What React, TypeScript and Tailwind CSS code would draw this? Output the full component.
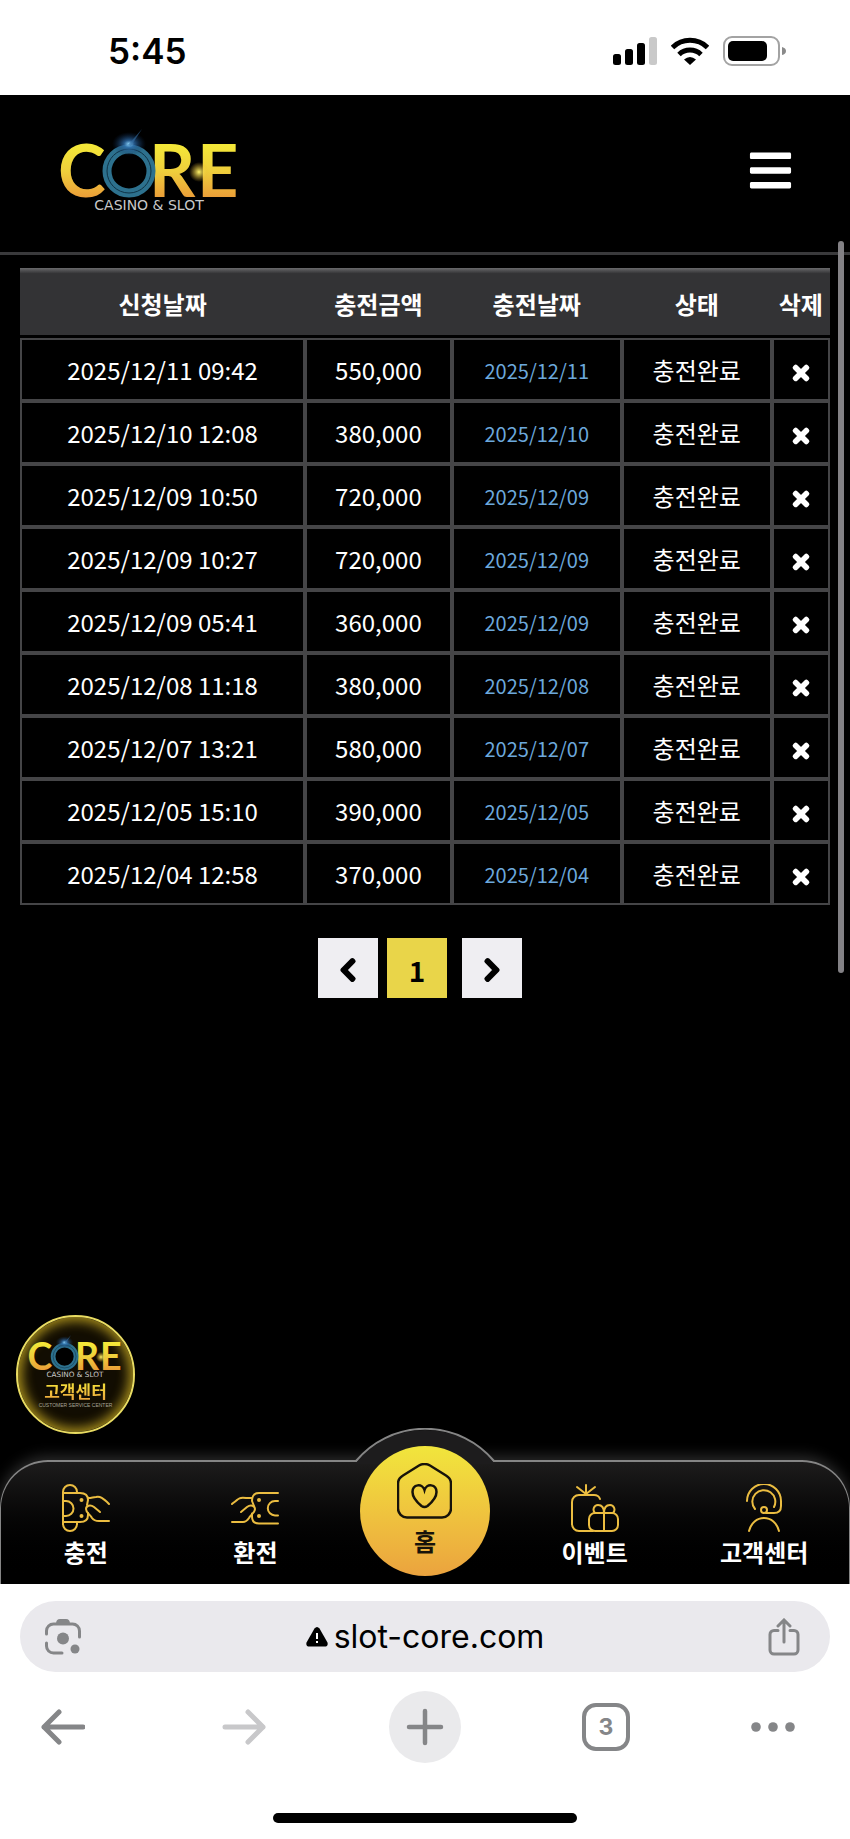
import { FaBars, FaChevronLeft, FaChevronRight, FaTimes } from "react-icons/fa"

const deposits = [
	{ requested: "2025/12/11 09:42", amount: "550,000", date: "2025/12/11" },
	{ requested: "2025/12/10 12:08", amount: "380,000", date: "2025/12/10" },
	{ requested: "2025/12/09 10:50", amount: "720,000", date: "2025/12/09" },
	{ requested: "2025/12/09 10:27", amount: "720,000", date: "2025/12/09" },
	{ requested: "2025/12/09 05:41", amount: "360,000", date: "2025/12/09" },
	{ requested: "2025/12/08 11:18", amount: "380,000", date: "2025/12/08" },
	{ requested: "2025/12/07 13:21", amount: "580,000", date: "2025/12/07" },
	{ requested: "2025/12/05 15:10", amount: "390,000", date: "2025/12/05" },
	{ requested: "2025/12/04 12:58", amount: "370,000", date: "2025/12/04" },
]

const line = {
	width: 48,
	height: 48,
	viewBox: "0 0 48 48",
	fill: "none",
	stroke: "#ebbd41",
	strokeWidth: 2,
	strokeLinecap: "round" as const,
	strokeLinejoin: "round" as const,
}

const icons = {
	Deposit: () => (
		<svg {...line}>
			<path d="M1 8v32a7 7 0 0 0 14 0v-2M1 8a7 7 0 0 1 14 0v1" />
			<path d="M1 9h17c5 0 8 2 8 7l-1 5M1 38h17c5 0 8-2 8-7v-2" />
			<path d="M1 17h3a7.500 7.500 0 0 1 0 15H1" />
			<circle cx="19.500" cy="16" r="1" fill="#ebbd41" />
			<circle cx="19.500" cy="32" r="1" fill="#ebbd41" />
			<path d="M26 14c4 0 5-1 8-1 4-1 7 1 13 7" />
			<path d="M38 28l-6-5c-4-3-8-1-8 2 0 4 4 5 6 9 2 3 4 3 7 3h10" />
		</svg>
	),
	Withdraw: () => (
		<svg {...line}>
			<path d="M47 9H28c-5 0-7 3-7 8l2 5M47 39.500H28c-5 0-7-3-7-7v-3" />
			<path d="M47 17h-3a7.200 7.200 0 0 0 0 14.400h3" />
			<circle cx="28" cy="16" r="1" fill="#ebbd41" />
			<circle cx="28" cy="32" r="1" fill="#ebbd41" />
			<path d="M21 14h-6c-6-1-7 0-14 6" />
			<path d="M10 28l6-5c4-3 8-1 8 2 0 4-4 5-6 9-2 3-3 4-6 4H1" />
		</svg>
	),
	Event: () => (
		<svg {...line}>
			<path d="M15 10V1M15 10L6 3M15 10l9-7" />
			<path d="M29 15c-1-3-3-4-6-4H8a7 7 0 0 0-7 7v22a7 7 0 0 0 7 7h14" />
			<rect x="18" y="29" width="29" height="18" rx="6" />
			<path d="M33 29v18M33 29c0-5-2-8-6-8s-6 5-3 8M33 29c0-5 2-8 6-8s6 5 3 8" />
		</svg>
	),
	Support: () => (
		<svg {...line}>
			<path d="M7 17a17 17 0 0 1 34 0v5c0 5-3 7-7 7h-8" />
			<path d="M15 25a11.500 11.500 0 1 1 19-2" />
			<circle cx="24" cy="26" r="3" />
			<path d="M9 47c2-8 8-13 15-13s13 5 15 13" />
		</svg>
	),
	House: () => (
		<svg width="55" height="56" viewBox="0 0 55 56" fill="none" stroke="#17130a" strokeWidth="2.500">
			<path d="M22 2.500q5.500-3 11 0l16 10q5 3 5 8v25a9 9 0 0 1-9 9H10a9 9 0 0 1-9-9v-25q0-5 5-8z" />
			<path d="M27.500 27c-2-7-12-6-12 2 0 5 3 9 9 14q3 2 6 0c6-5 9-9 9-14 0-8-10-9-12-2z" />
		</svg>
	),
}

function Logo({ className }: { className: string }) {
	return (
		<svg viewBox="0 -6 190 96" className={className} role="img" aria-label="CORE CASINO & SLOT">
			<defs>
				<linearGradient id="gold" gradientUnits="userSpaceOnUse" x1="0" y1="17" x2="0" y2="69">
					<stop offset="0" stopColor="#f4e838" />
					<stop offset=".5" stopColor="#efcf3c" />
					<stop offset="1" stopColor="#eb9f38" />
				</linearGradient>
				<radialGradient id="flare">
					<stop offset="0" stopColor="#8fd8ff" />
					<stop offset=".3" stopColor="#2f6fae" stopOpacity=".8" />
					<stop offset="1" stopColor="#0d2b55" stopOpacity="0" />
				</radialGradient>
				<radialGradient id="spark">
					<stop offset="0" stopColor="#fff56a" />
					<stop offset="1" stopColor="#e8b52b" stopOpacity="0" />
				</radialGradient>
			</defs>
			<g fill="url(#gold)" fontFamily="Lato, sans-serif" fontWeight="700" fontSize="72">
				<text x="3" y="69">C</text>
				<text x="94" y="69">R</text>
				<text x="142" y="69">E</text>
			</g>
			<circle cx="74" cy="43" r="22" fill="#000" stroke="#2d718e" strokeWidth="9" />
			<circle cx="74" cy="43" r="22" fill="none" stroke="#0f3346" strokeWidth="1" />
			<ellipse cx="74" cy="16" rx="17" ry="12" fill="url(#flare)" />
			<path d="M73 17L87 1L76 18z" fill="#356fa5" opacity=".6" />
			<circle cx="144" cy="44" r="10" fill="url(#spark)" />
			<text x="94" y="82" textAnchor="middle" fill="#c9c9c9" fontFamily="DejaVu Sans, sans-serif" fontSize="14">
				CASINO &amp; SLOT
			</text>
		</svg>
	)
}

function StatusBar() {
	return (
		<div className="flex h-[95px] items-center justify-between bg-white pt-1.5 pr-16 pl-[108px]">
			<p className="font-['Inter',sans-serif] text-[35px] leading-10 font-semibold">5:45</p>
			<div className="flex items-center gap-[14px]">
				<svg width="44" height="28" viewBox="0 0 44 28">
					<rect x="0" y="17" width="8" height="11" rx="2.500" />
					<rect x="12" y="12" width="8" height="16" rx="2.500" />
					<rect x="24" y="6" width="8" height="22" rx="2.500" />
					<rect x="36" y="0" width="8" height="28" rx="2.500" fill="#c9c9c9" />
				</svg>
				<svg width="38" height="28" viewBox="0 0 38 28" fill="none" stroke="#000" strokeWidth="5">
					<path d="M1.500 10.500a25 25 0 0 1 35 0" />
					<path d="M8 17.500a16 16 0 0 1 22 0" />
					<path d="M13 22.500q6-5 12 0L19 28z" fill="#000" stroke="none" />
				</svg>
				<svg width="63" height="30" viewBox="0 0 63 30">
					<rect x="1" y="1" width="55" height="28" rx="8" fill="none" stroke="#a3a3a3" strokeWidth="2" />
					<rect x="5" y="5" width="39" height="20" rx="5" />
					<path d="M59 11q4 1 4 4t-4 4z" fill="#8a8a8a" />
				</svg>
			</div>
		</div>
	)
}

function DepositTable() {
	return (
		<table className="w-full table-fixed border-separate border-spacing-0 text-center text-[24px] leading-8">
			<colgroup>
				<col className="w-[35.2%]" />
				<col className="w-[18.1%]" />
				<col className="w-[21%]" />
				<col className="w-[18.5%]" />
				<col className="w-[7.2%]" />
			</colgroup>
			<thead>
				<tr className="h-[70px] bg-linear-to-b from-[#6a6a6c] to-[#333335] to-8%">
					{["신청날짜", "충전금액", "충전날짜", "상태", "삭제"].map((name) => (
						<th key={name} scope="col" className="border-b-3 border-black pt-1 font-bold whitespace-nowrap">
							{name}
						</th>
					))}
				</tr>
			</thead>
			<tbody>
				{deposits.map((row) => (
					<tr key={row.requested} className="h-[63px] *:border-2 *:border-[#454547]">
						<td>{row.requested}</td>
						<td>{row.amount}</td>
						<td>
							<span className="text-[20px] text-[#6ca8dc]">{row.date}</span>
						</td>
						<td>충전완료</td>
						<td>
							<button aria-label="삭제" className="align-middle">
								<FaTimes size={22} stroke="currentColor" strokeWidth={36} />
							</button>
						</td>
					</tr>
				))}
			</tbody>
		</table>
	)
}

function Pagination() {
	return (
		<div className="mt-[33px] flex justify-center pr-[10px] text-black *:flex *:size-[60px] *:items-center *:justify-center *:pt-1">
			<button aria-label="이전" className="bg-[#efeef2]">
				<FaChevronLeft size={26} stroke="currentColor" strokeWidth={36} />
			</button>
			<button className="mr-[15px] ml-[9px] bg-[#e9d549] text-[28px] leading-8 font-bold">1</button>
			<button aria-label="다음" className="bg-[#efeef2]">
				<FaChevronRight size={26} stroke="currentColor" strokeWidth={36} />
			</button>
		</div>
	)
}

function TabItem({ icon: Icon, label }: { icon: () => React.ReactNode; label: string }) {
	return (
		<a href="#" className="flex flex-col items-center gap-1.5 pt-[22px] pb-[18px]">
			<Icon />
			<span className="leading-7">{label}</span>
		</a>
	)
}

function TabBar() {
	return (
		<nav className="relative grid grid-cols-5 rounded-t-[48px] border-x border-t-2 border-[#858585] bg-linear-to-b from-[#1d1c1c] to-black text-[24px] font-bold shadow-[0_-4px_14px_#2b2b2b]">
			<svg width="140" height="36" viewBox="0 0 140 36" className="absolute -top-[34px] left-1/2 -translate-x-1/2">
				<path d="M0 36L2 33A90 90 0 0 1 138 33L140 36z" fill="#1d1c1d" />
				<path d="M0 33h1A90 90 0 0 1 139 33h1" fill="none" stroke="#858585" strokeWidth="2" />
			</svg>
			<TabItem icon={icons.Deposit} label="충전" />
			<TabItem icon={icons.Withdraw} label="환전" />
			<a
				href="#"
				className="relative -mt-4 flex size-[130px] flex-col items-center gap-2 justify-self-center rounded-full bg-linear-to-b from-[#f1e63c] to-[#eba33e] pt-[17px] text-[#17130a]"
			>
				<icons.House />
				<span className="leading-7">홈</span>
			</a>
			<TabItem icon={icons.Event} label="이벤트" />
			<TabItem icon={icons.Support} label="고객센터" />
		</nav>
	)
}

function BrowserBar() {
	return (
		<footer className="relative bg-white px-5 pt-[17px] pb-4 font-['Inter',sans-serif] text-[#858688]">
			<div className="flex h-[71px] items-center justify-between rounded-full bg-[#eae9ed] pr-[30px] pl-6">
				<button aria-label="Lens">
					<svg width="38" height="38" viewBox="0 0 38 38" fill="none" stroke="currentColor" strokeWidth="3" strokeLinecap="round">
						<path d="M2.500 16v-3a7 7 0 0 1 7-7h19a7 7 0 0 1 7 7v6M2.500 25v3a7 7 0 0 0 7 7H18" />
						<path d="M12 6q0-5 4-5h6q4 0 4 5z" fill="currentColor" stroke="none" />
						<circle cx="19" cy="20.500" r="6" fill="currentColor" stroke="none" />
						<circle cx="31" cy="31" r="4.500" fill="currentColor" stroke="none" />
					</svg>
				</button>
				<a href="#" className="flex items-center gap-1.5 text-[32px] leading-9 text-black">
					<svg width="22" height="20" viewBox="0 0 22 20">
						<path d="M8.500 1.500q2.500-3 5 0l8 14q1 4-3 4h-15q-4 0-3-4z" />
						<path d="M11 6v6M11 14v2" stroke="#fff" strokeWidth="2" />
					</svg>
					slot-core.com
				</a>
				<button aria-label="Share">
					<svg width="32" height="38" viewBox="0 0 32 38" fill="none" stroke="currentColor" strokeWidth="3" strokeLinecap="round">
						<path d="M16 24V3M10 8l6-6 6 6" />
						<path d="M10 12.500H6a4 4 0 0 0-4 4V32a4 4 0 0 0 4 4h20a4 4 0 0 0 4-4V16.500a4 4 0 0 0-4-4h-4" />
					</svg>
				</button>
			</div>
			<div className="mt-[19px] flex justify-between px-[7px] *:flex *:size-[72px] *:items-center *:justify-center">
				<button aria-label="Back">
					<svg width="44" height="36" viewBox="0 0 44 36" fill="none" stroke="currentColor" strokeWidth="5" strokeLinecap="round" strokeLinejoin="round">
						<path d="M42 18H3M18 3L3 18l15 15" />
					</svg>
				</button>
				<button aria-label="Forward" className="text-[#c8c8ca]">
					<svg width="44" height="36" viewBox="0 0 44 36" fill="none" stroke="currentColor" strokeWidth="5" strokeLinecap="round" strokeLinejoin="round">
						<path d="M3 18h38M26 3l15 15-15 15" />
					</svg>
				</button>
				<button aria-label="New tab" className="rounded-full bg-[#eaeaec]">
					<svg width="38" height="38" viewBox="0 0 38 38" stroke="currentColor" strokeWidth="4.500" strokeLinecap="round">
						<path d="M19 3v32M3 19h32" />
					</svg>
				</button>
				<button aria-label="Tabs">
					<span className="flex size-12 items-center justify-center rounded-[14px] border-4 border-current text-[23px] font-bold">3</span>
				</button>
				<button aria-label="More">
					<svg width="44" height="10" viewBox="0 0 44 10" fill="currentColor" className="mr-auto">
						<circle cx="5" cy="5" r="4.800" />
						<circle cx="22" cy="5" r="4.800" />
						<circle cx="39" cy="5" r="4.800" />
					</svg>
				</button>
			</div>
			<div className="mx-auto mt-[50px] h-[10px] w-[304px] rounded-full bg-black" />
		</footer>
	)
}

export default function App() {
	return (
		<div className="flex min-h-screen flex-col bg-black font-['Noto_Sans_CJK_KR',sans-serif]">
			<StatusBar />
			<div className="relative flex flex-1 flex-col text-white">
				<header className="flex items-center justify-between border-b-3 border-[#3a3a3c] pt-[27px] pr-14 pb-[34px] pl-[55px]">
					<a href="#">
						<Logo className="h-[96px] w-[190px]" />
					</a>
					<button aria-label="메뉴">
						<FaBars size={47} />
					</button>
				</header>
				<div className="absolute top-[146px] right-[6px] h-[732px] w-[6px] rounded-full bg-[#838185]" />
				<main className="flex-1 px-5 pt-[13px]">
					<DepositTable />
					<Pagination />
				</main>
				<a
					href="#"
					className="mb-[26px] ml-4 flex size-[119px] flex-col items-center rounded-full border-2 border-[#e9dc62] bg-[#120d02] pt-3.5 shadow-[inset_0_0_12px_4px_#a58c1c]"
				>
					<Logo className="h-[50px] w-[99px]" />
					<span className="bg-linear-to-b from-[#f4e838] to-[#eba33e] bg-clip-text text-[17px] leading-5 font-bold text-transparent">
						고객센터
					</span>
					<span className="font-['Liberation_Sans',sans-serif] text-[5px] leading-2 text-[#a8a496]">
						CUSTOMER SERVICE CENTER
					</span>
				</a>
				<TabBar />
			</div>
			<BrowserBar />
		</div>
	)
}
